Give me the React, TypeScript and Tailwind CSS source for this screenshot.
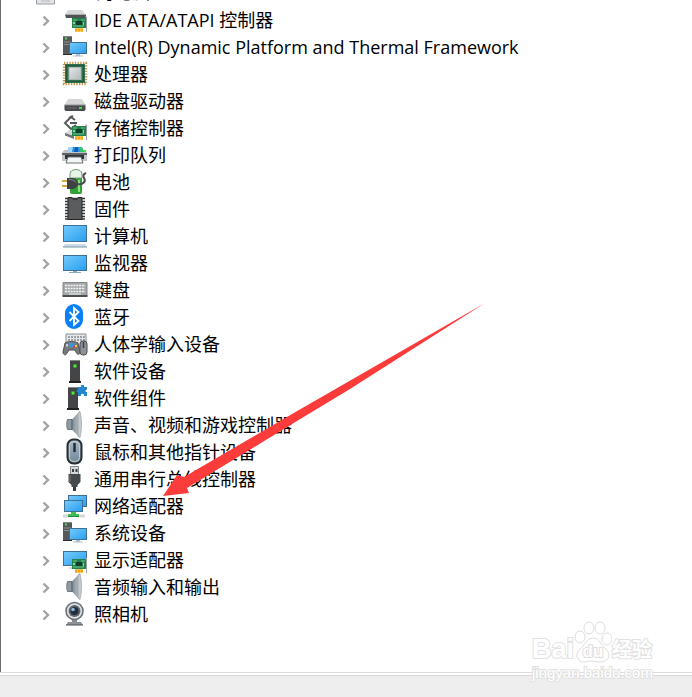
import React from 'react';

const Screen = ({ x, y, w, h }: { x: number; y: number; w: number; h: number }) => (
  <>
    <rect x={x} y={y} width={w} height={h} fill="#3f6f93" />
    <rect x={x + 1} y={y + 1} width={w - 2} height={h - 2} fill="url(#screen)" />
  </>
);

const Board = ({ y = 12 }: { y?: number }) => (
  <>
    <rect x="11" y={y} width="14" height="10" fill="#26804a" />
    <path d={`M12 ${y + 2}h4M12 ${y + 8}h11M20 ${y + 2}h4`} stroke="#63c98c" />
    <rect x="15" y={y + 3} width="6" height="4" fill="#123c2b" />
    <rect x="12" y={y + 4} width="2" height="2" fill="#7cdba0" />
    <rect x="22" y={y + 4} width="1" height="3" fill="#7cdba0" />
    <path d={`M14 ${y + 12}h8`} stroke="#f5a30c" strokeWidth="3.4" />
    <path d={`M16.5 ${y + 11}v3M19.5 ${y + 11}v3`} stroke="#ffd45c" strokeWidth=".7" />
    <path d={`M24 ${y - 1}h1.5v15`} stroke="#9a9fa4" fill="none" />
  </>
);

const TowerAndScreen = () => (
  <>
    <rect x="2" y="3" width="9" height="19" fill="#56595c" />
    <path d="M2 3h9v1H2z" fill="#85888b" />
    <rect x="4" y="4.5" width="2" height="2" fill="#4fe04a" />
    <path d="M3 9h7M3 11.5h7" stroke="#8c8f92" />
    <path d="M2 21.5h9" stroke="#292b2d" />
    <Screen x={8} y={9} w={18} h={12} />
    <path d="M15 21h4v1.5h3v1H12v-1h3z" fill="#a9c0d3" />
  </>
);

const Speaker = () => (
  <>
    <path d="M6.5 8.5H11v10H6.5c-1-3-1-7 0-10z" fill="#8e9ba5" stroke="#6d7880" />
    <path d="M11 8.5L18 1v25l-7-7.5z" fill="url(#cone)" />
    <path d="M17 2l2-1.500c2 8 2 18 0 26L17 25z" fill="#c5cbcf" stroke="#8b949b" strokeWidth=".6" />
    <path d="M11 8.5v10" stroke="#58636c" />
  </>
);

const icons: Record<string, React.ReactNode> = {
  ide: (
    <>
      <path d="M7 4h14l4 5H4z" fill="#d5d7d9" />
      <path d="M4 8.5h21V12H5z" fill="#505356" />
      <path d="M4 8.5h21" stroke="#a9abad" />
      <Board />
    </>
  ),
  system: <TowerAndScreen />,
  cpu: (
    <>
      <rect x="3" y="3" width="22" height="21" fill="none" stroke="#c79a4e" strokeWidth="2.4" strokeDasharray="1.4 1.3" />
      <rect x="4" y="4" width="20" height="19" fill="#2f6f50" />
      <rect x="5.5" y="5.5" width="17" height="16" fill="none" stroke="#225a40" />
      <rect x="8" y="7.5" width="12" height="12" fill="url(#steel)" stroke="#a8b8ae" />
    </>
  ),
  disk: (
    <>
      <path d="M7 12h14l3.5 6h-21z" fill="#d4d6d8" />
      <path d="M3.5 18h21v4.5l-1 1.5h-19l-1-1.5z" fill="#494c4f" />
      <path d="M3.5 18h21" stroke="#929598" />
      <path d="M6 21h9" stroke="#6a6d70" />
      <rect x="18" y="20" width="3" height="2" fill="#3ee03c" />
    </>
  ),
  storage: (
    <>
      <path d="M4 19l6-4 3 7z" fill="#d5d7d9" />
      <path d="M4 19l9 3v3l-9-3.5z" fill="#717578" />
      <path d="M14 6l-4-3-6 6 6 6 5-4M9 9h7M8 4l4-2" fill="none" stroke="#55585b" strokeWidth="2" />
      <Board />
    </>
  ),
  printer: (
    <>
      <path d="M3 9h21l2 3v8H1v-8z" fill="#c3c6c9" />
      <path d="M8 6h13l2 5H6z" fill="#2f8ee6" />
      <path d="M8 6h4l-1 5H6z" fill="#9ed6fa" />
      <path d="M14 6h3v5h-4z" fill="#0e5dc0" />
      <path d="M18 6h3l2 5h-4z" fill="#35c56a" />
      <path d="M1 12h25v2H1z" fill="#5f6265" />
      <path d="M4 14h19v4H4z" fill="#2f3234" />
      <rect x="23" y="9" width="2" height="2" fill="#45e849" />
      <path d="M7 16h13l2 6H5z" fill="#f4f7f8" stroke="#6a6e71" />
    </>
  ),
  battery: (
    <>
      <rect x="9" y="3" width="12" height="23" rx="2" fill="#2fa233" />
      <path d="M9 6c0-6 12-6 12 0v4H9z" fill="#e8f3e8" stroke="#799a7a" />
      <path d="M18 12v12" stroke="#8ae380" strokeWidth="2" />
      <path d="M1 13h6M1 18h6" stroke="#d9a743" strokeWidth="2" />
      <path d="M6 10h4c4 0 7 2 7 5.5S14 21 10 21H6z" fill="#3f4242" />
      <path d="M8 11.5c3 0 6 1 7 3" stroke="#85898a" fill="none" />
      <path d="M16 16c7 1 9-3 7-6-1-2-1-4 2-5" fill="none" stroke="#4a4d4d" strokeWidth="2" />
    </>
  ),
  firmware: (
    <>
      <path d="M4 3.5h20M4 6.5h20M4 9.5h20M4 12.5h20M4 15.5h20M4 18.5h20M4 21.5h20M4 24h20" stroke="#363839" strokeWidth="1.6" />
      <path d="M7 2.5h4c0 3 6 3 6 0h4v22H7z" fill="#5a5c5e" stroke="#242627" />
    </>
  ),
  computer: (
    <>
      <Screen x={2} y={3} w={24} h={17} />
      <path d="M4 22h20l2 3H2z" fill="#c9dce8" />
      <path d="M2 25h24" stroke="#7895a9" />
    </>
  ),
  monitor: (
    <>
      <Screen x={2} y={6} w={24} h={16} />
      <path d="M12 22h4v1h4v1H8v-1h4z" fill="#8ba9bf" />
    </>
  ),
  keyboard: (
    <>
      <path d="M2 6.5h24v13H2z" fill="#a5a8aa" stroke="#85888a" />
      <path d="M4 9.5h20M4 12.5h20M4 15.5h20" stroke="#f4f5f5" strokeWidth="1.6" strokeDasharray="2 .8" />
      <path d="M8 18h12" stroke="#eceeee" />
      <path d="M1.5 20h25" stroke="#4d5052" strokeWidth="2" />
    </>
  ),
  bluetooth: (
    <>
      <rect x="4" y="1" width="18" height="25" rx="9" fill="#0981f5" />
      <path d="M8.5 9l9 9-4.5 4V5l4.5 4-9 9" fill="none" stroke="#fff" strokeWidth="1.8" />
    </>
  ),
  hid: (
    <>
      <path d="M5 4h20v13H5z" fill="#e5e7e8" stroke="#8b8f91" />
      <path d="M7 7h17M7 10h17" stroke="#9da1a4" strokeWidth="1.8" strokeDasharray="2 1" />
      <path d="M4 13c3-2 10-2 13 0l2 9c0 3-3 3-4 0l-1-2H8l-2 3c-1 3-4 2-4-1z" fill="#777b7e" stroke="#4d5154" />
      <path d="M5 15h2M6 14v3" stroke="#e5e7e8" />
      <rect x="8" y="13" width="4" height="4" fill="#3099e8" />
      <path d="M12 16h2v2h-2z" fill="#e13d37" />
      <path d="M14 15h2v2h-2z" fill="#f1c63b" />
      <rect x="19" y="11" width="7" height="14" rx="3" fill="#8d9296" stroke="#4b4f51" />
      <path d="M22.5 12v6" stroke="#3d4042" strokeWidth="1.5" />
    </>
  ),
  device: (
    <>
      <path d="M9 3h10v21H9z" fill="#434547" />
      <path d="M9 3h10v1H9z" fill="#858789" />
      <path d="M8 24h12v2H8z" fill="#1f2122" />
      <rect x="12.5" y="7.5" width="3" height="3" fill="#42f32f" />
    </>
  ),
  component: (
    <>
      <path d="M7 3h10v21H7z" fill="#434547" />
      <path d="M7 3h10v1H7z" fill="#858789" />
      <path d="M6 24h12v2H6z" fill="#1f2122" />
      <rect x="10.5" y="7.5" width="3" height="3" fill="#42f32f" />
      <path d="M17 3h3c-1-3 4-3 3 0h3v3c-2-1-2 3 0 2v4h-3c1-3-4-3-3 0h-3V8c-2 1-2-3 0-2z" fill="#2385cd" />
    </>
  ),
  speaker: <Speaker />,
  mouse: (
    <>
      <rect x="6.5" y="1.5" width="14" height="24" rx="6" fill="url(#mouse)" stroke="#292e32" strokeWidth="2" />
      <rect x="8.5" y="3.5" width="10" height="20" rx="4" fill="none" stroke="#bdcbd5" />
      <path d="M13.5 5v9" stroke="#272c30" strokeWidth="2.5" />
      <path d="M13.5 14v2" stroke="#728898" />
    </>
  ),
  usb: (
    <>
      <path d="M9.5 1.5h8v8h-8z" fill="#d5d7d8" stroke="#838789" />
      <path d="M11 4h2v3h-2zM14.5 4h2v3h-2z" fill="#3b3e40" />
      <path d="M7.5 9h12v8l-3 3v2h-6v-2l-3-3z" fill="#46494b" />
      <path d="M9 10v7" stroke="#74777a" />
      <path d="M13.5 22v4" stroke="#36393b" strokeWidth="3" />
    </>
  ),
  network: (
    <>
      <Screen x={7} y={3} w={19} h={12} />
      <Screen x={3} y={8} w={19} h={12} />
      <path d="M10 20h5v2h3v3H7v-3h3z" fill="#43bc50" />
      <path d="M2 24h5M18 24h6" stroke="#d3d8da" strokeWidth="3" />
      <path d="M7 24.5h11" stroke="#23913b" />
    </>
  ),
  display: (
    <>
      <Screen x={2} y={5} w={24} h={15} />
      <path d="M8 22h5" stroke="#a2bacc" />
      <Board y={13} />
    </>
  ),
  camera: (
    <>
      <path d="M11 19h5v3h4l2 3H5l2-3h4z" fill="#8b9195" />
      <circle cx="13.5" cy="11" r="8.5" fill="#dfe2e4" stroke="#6b7074" strokeWidth="1.6" />
      <circle cx="13.5" cy="11" r="6" fill="#60686e" />
      <circle cx="13.5" cy="11" r="4" fill="#202e40" />
      <circle cx="12" cy="9.5" r="1.8" fill="#86b9dd" />
      <path d="M5 25h17" stroke="#4d5356" />
    </>
  ),
};

const devices = [
  { icon: 'ide', name: 'IDE ATA/ATAPI 控制器' },
  { icon: 'system', name: 'Intel(R) Dynamic Platform and Thermal Framework' },
  { icon: 'cpu', name: '处理器' },
  { icon: 'disk', name: '磁盘驱动器' },
  { icon: 'storage', name: '存储控制器' },
  { icon: 'printer', name: '打印队列' },
  { icon: 'battery', name: '电池' },
  { icon: 'firmware', name: '固件' },
  { icon: 'computer', name: '计算机' },
  { icon: 'monitor', name: '监视器' },
  { icon: 'keyboard', name: '键盘' },
  { icon: 'bluetooth', name: '蓝牙' },
  { icon: 'hid', name: '人体学输入设备' },
  { icon: 'device', name: '软件设备' },
  { icon: 'component', name: '软件组件' },
  { icon: 'speaker', name: '声音、视频和游戏控制器' },
  { icon: 'mouse', name: '鼠标和其他指针设备' },
  { icon: 'usb', name: '通用串行总线控制器' },
  { icon: 'network', name: '网络适配器' },
  { icon: 'system', name: '系统设备' },
  { icon: 'display', name: '显示适配器' },
  { icon: 'speaker', name: '音频输入和输出' },
  { icon: 'camera', name: '照相机' },
];

const Gradients = () => (
  <svg className="absolute size-0" aria-hidden="true">
    <defs>
      <linearGradient id="screen" x1="0" y1="0" x2="1" y2="1">
        <stop offset="0" stopColor="#72c9fb" />
        <stop offset="1" stopColor="#2b9ff0" />
      </linearGradient>
      <linearGradient id="steel" x1="0" y1="0" x2="1" y2="1">
        <stop offset="0" stopColor="#e6e8e9" />
        <stop offset="1" stopColor="#b2b7ba" />
      </linearGradient>
      <linearGradient id="cone" x1="0" y1="0" x2="1" y2="0">
        <stop offset="0" stopColor="#7d8991" />
        <stop offset="1" stopColor="#b9c1c6" />
      </linearGradient>
      <linearGradient id="mouse" x1="0" y1="0" x2="0" y2="1">
        <stop offset="0" stopColor="#a9bac7" />
        <stop offset="1" stopColor="#6f8798" />
      </linearGradient>
    </defs>
  </svg>
);

const Watermark = () => (
  <div className="pointer-events-none absolute right-8 bottom-3.5 flex w-32 flex-col text-white">
    <div className="flex h-10 items-end">
      <span className="font-['Liberation_Sans'] text-[27px] leading-7 font-bold [paint-order:stroke_fill] [-webkit-text-stroke:2px_#e2e2e2]">Bai</span>
      <svg viewBox="0 0 38 42" className="h-[42px] w-[38px] shrink-0" fill="#fff" stroke="#dedede">
        <ellipse cx="6" cy="16" rx="5" ry="6" />
        <ellipse cx="15" cy="7" rx="5" ry="6" />
        <ellipse cx="26" cy="7" rx="5" ry="6" />
        <ellipse cx="33" cy="18" rx="5" ry="6" />
        <path d="M19 17c6 0 8 7 13 11 6 6 2 13-5 13-5 0-10-2-16 0-8 1-11-8-5-13 5-4 7-11 13-11z" />
        <text x="19" y="36" textAnchor="middle" fontFamily="Liberation Sans" fontSize="17" fontWeight="bold" strokeWidth="2" paintOrder="stroke">du</text>
      </svg>
      <span className="font-['Noto_Sans_CJK_SC',sans-serif] text-[20px] leading-7 font-bold whitespace-nowrap [paint-order:stroke_fill] [-webkit-text-stroke:2px_#e2e2e2]">经验</span>
    </div>
    <span className="font-['Liberation_Sans'] text-[15px] leading-5 [paint-order:stroke_fill] [-webkit-text-stroke:2px_#e2e2e2]">jingyan.baidu.com</span>
  </div>
);

const App = () => {
  return (
    <div className="relative flex min-h-screen flex-col overflow-hidden bg-white font-['Open_Sans','Noto_Sans_CJK_SC',sans-serif] text-lg leading-[27px] text-black">
      <Gradients />
      <main className="flex-1 border-l border-[#6b6b6b]">
        {/* Root node, scrolled almost out of view */}
        <div className="flex h-1.5 items-end gap-10 overflow-hidden pl-[35px]">
          <svg viewBox="0 0 20 27" className="h-[27px] w-5 shrink-0">
            <path d="M.5 10h18v15H.5z" fill="#e1e3e6" stroke="#9a9da2" />
            <path d="M5 22h9" stroke="#b5b8bd" />
          </svg>
          <span className="h-[27px]">的电脑</span>
        </div>
        <ul>
          {devices.map((device, index) => (
            <li key={index} className="flex h-[27px] items-center pl-[39px]">
              <button type="button" aria-label={`展开 ${device.name}`} className="mr-2 flex h-[27px] w-[13px] items-center">
                <svg viewBox="0 0 13 27" className="h-[27px] w-[13px]">
                  <path d="M3.5 10.5L8 15l-4.5 4.5" fill="none" stroke="#a3a3a3" strokeWidth="2.4" />
                </svg>
              </button>
              <svg viewBox="0 0 28 27" className="mr-[5px] h-[27px] w-7 shrink-0" aria-hidden="true">
                {icons[device.icon]}
              </svg>
              <span className="pt-0.5 whitespace-nowrap">{device.name}</span>
            </li>
          ))}
        </ul>
      </main>
      <footer className="flex h-[25px] flex-col border-t border-[#dcdcdc] pt-0.5">
        <div className="flex-1 border-t border-[#d8d8d8] bg-[#eee]" />
      </footer>

      {/* Arrow pointing at the network adapters */}
      <svg viewBox="0 0 324 195" className="pointer-events-none absolute top-[302px] left-[162px] h-[195px] w-[324px]">
        <path d="M1 194L15 173L22 175L130 112L323 1L188 87L130 122L25 186L27 191Z" fill="#fc3b3b" />
      </svg>
      <Watermark />
    </div>
  );
};

export default App;
